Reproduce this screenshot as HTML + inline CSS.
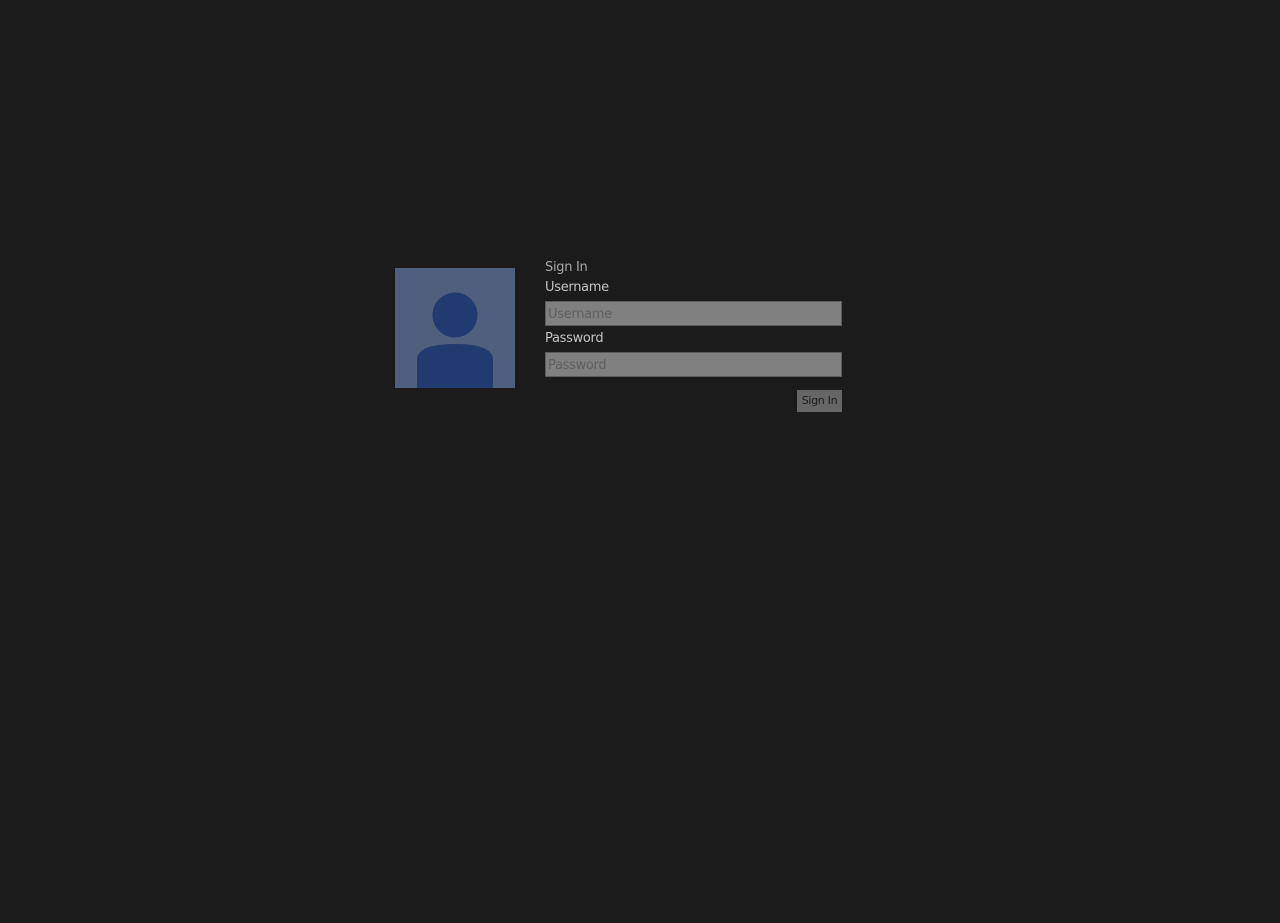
<!DOCTYPE html>
<html><head><meta charset="utf-8"><style>
html,body{margin:0;padding:0;width:1280px;height:923px;background:#1b1b1b;overflow:hidden;font-family:"DejaVu Sans","Liberation Sans",sans-serif;}
.t{position:absolute;color:#c4c4c4;font-size:13px;line-height:16px;letter-spacing:-0.3px}
.in{position:absolute;left:545px;width:293px;height:23px;background:#808080;border:1px solid #5c5c5c;color:#5e5e5e;font-size:13px;line-height:25px;padding-left:2px;box-sizing:content-box;letter-spacing:-0.3px}
.btn{position:absolute;left:797px;top:390px;width:45px;height:22px;background:#666;color:#1a1a1a;font-size:11px;line-height:22px;text-align:center;letter-spacing:-0.3px}
</style></head><body>
<svg style="position:absolute;left:395px;top:268px" width="120" height="120" viewBox="0 0 120 120">
<rect width="120" height="120" fill="#4f5f7e"/>
<circle cx="60" cy="47" r="22.5" fill="#213a6f"/>
<path d="M22 120 V92 Q22 76 60 76 Q98 76 98 92 V120 Z" fill="#213a6f"/>
</svg>
<div class="t" style="left:545px;top:260px;color:#a8a8a8">Sign In</div>
<div class="t" style="left:545px;top:280px">Username</div>
<div class="in" style="top:301px">Username</div>
<div class="t" style="left:545px;top:331px">Password</div>
<div class="in" style="top:352px">Password</div>
<div class="btn">Sign In</div>
</body></html>
